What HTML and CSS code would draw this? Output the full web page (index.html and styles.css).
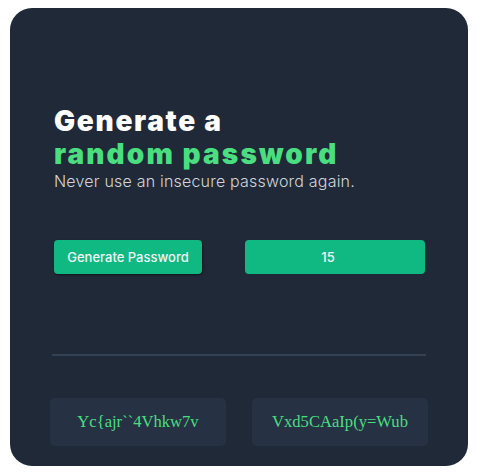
FILE: index.html
```html
<!DOCTYPE html>
<html>
<head>
<meta charset="utf-8">
<link rel="stylesheet" href="styles.css">
</head>
<body>
<main class="card">
  <header class="intro">
    <h1 class="title">Generate a<br><span class="accent">random password</span></h1>
    <p class="subtitle">Never use an insecure password again.</p>
  </header>
  <div class="controls">
    <button class="btn-generate">Generate Password</button>
    <div class="length-box">15</div>
  </div>
  <hr class="divider">
  <div class="results">
    <div class="pw-box">Yc{ajr``4Vhkw7v</div>
    <div class="pw-box">Vxd5CAaIp(y=Wub</div>
  </div>
</main>
</body>
</html>
```

FILE: styles.css
```css
* { box-sizing: border-box; }
html, body { margin: 0; background: #ffffff; }
body { padding: 8px 9px 10px 10px; }

.card {
  width: 458px;
  height: 458px;
  background: #1f2937;
  border-radius: 22px;
  padding: 97px 42px 0 42px;
  display: flex;
  flex-direction: column;
}

.intro { padding-left: 2px; }

.title {
  margin: 0;
  font-family: Inter, "Noto Sans", sans-serif;
  font-weight: 900;
  font-size: 28px;
  line-height: 33px;
  color: #ffffff;
  letter-spacing: 1.7px;
}
.title .accent { letter-spacing: 2.1px; }
.accent { color: #4ade80; }

.subtitle {
  margin: 0;
  font-family: Inter, "Noto Sans", sans-serif;
  font-weight: 300;
  font-size: 16px;
  line-height: 20px;
  color: #d1d5db;
  letter-spacing: 0.2px;
}

.controls {
  margin-top: 49px;
  padding: 0 1px 0 2px;
  display: flex;
  justify-content: space-between;
}

.btn-generate {
  width: 148px;
  height: 34px;
  border: none;
  border-radius: 4px;
  background: #10b981;
  color: #f3f4f6;
  font-family: Inter, "Noto Sans", sans-serif;
  font-weight: 500;
  font-size: 13px;
  box-shadow: 1px 1px 2px rgba(0,0,0,0.5);
  padding: 0;
}

.length-box {
  width: 180px;
  height: 34px;
  border-radius: 4px;
  background: #10b981;
  color: #f3f4f6;
  font-family: Inter, "Noto Sans", sans-serif;
  font-weight: 500;
  font-size: 13px;
  display: flex;
  align-items: center;
  justify-content: center;
  padding-right: 14px;
}

.divider {
  margin: 80px 0 0 0;
  border: none;
  height: 2px;
  background: #334155;
}

.results {
  margin-top: 42px;
  margin-left: -2px;
  margin-right: -2px;
  display: flex;
  justify-content: space-between;
}

.pw-box {
  width: 176px;
  height: 48px;
  border-radius: 5px;
  background: #263244;
  color: #4ade80;
  font-family: "Liberation Serif", serif;
  font-size: 16.6px;
  display: flex;
  align-items: center;
  justify-content: center;
}
```
